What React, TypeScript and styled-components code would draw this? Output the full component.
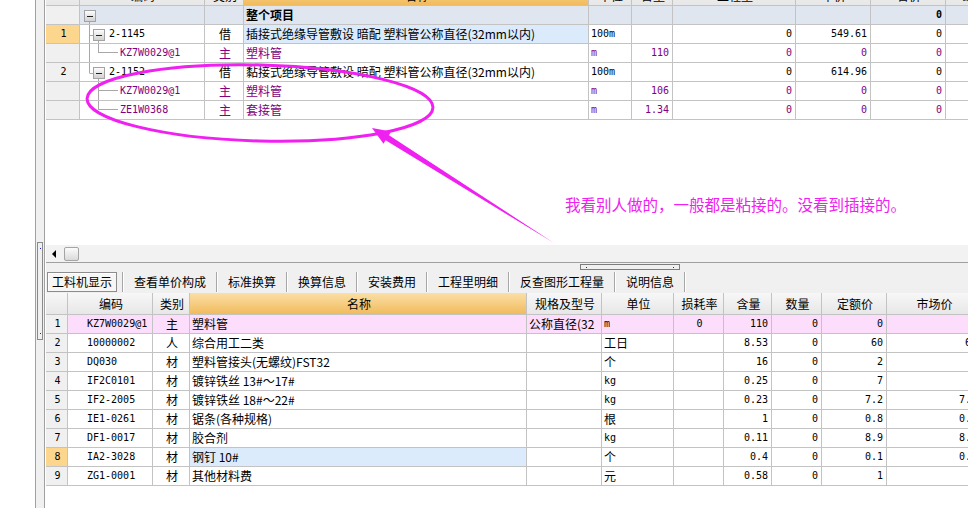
import React from "react";
import styled, { createGlobalStyle } from "styled-components";

const GlobalStyle = createGlobalStyle`
  html, body { margin: 0; padding: 0; background: #fff; overflow: hidden; }
  body {
    font-family: "Noto Sans CJK SC", "Noto Sans", sans-serif;
    font-size: 12px;
    color: #000;
  }
  * { box-sizing: border-box; }
`;

const LINE = "#c3c3c3";
const PURPLE = "#800080";
const MAGENTA = "#f020f0";
const MONO = `"DejaVu Sans Mono", "Liberation Mono", "Noto Sans CJK SC", monospace`;

const topCols = "34px 125px 39px 345px 43px 41px 123px 75px 75px 80px";
const bottomCols = "22px 85px 37px 337px 75px 72px 50px 48px 50px 65px 94px";

type Tone = "plain" | "num" | "numSel" | "group" | "focus" | "pink" | "head" | "headHot";

const tones: Record<Tone, string> = {
  plain: "#ffffff",
  num: "#f0f0f0",
  numSel: "#fdd68e",
  group: "#dfe6ef",
  focus: "#dcebfc",
  pink: "#fcdefc",
  head: "linear-gradient(#f7f7f7, #e7e7e7)",
  headHot: "linear-gradient(#fbdfa6, #f1bb5d)",
};

const Page = styled.div`
  position: relative;
  display: flex;
  width: 968px;
  height: 508px;
  overflow: hidden;
  background: #fff;
`;

const LeftBlank = styled.div`
  width: 35px;
  flex: none;
`;

const Gutter = styled.div`
  width: 10px;
  flex: none;
  border-left: 1px solid #a0a0a0;
  border-right: 1px solid #a0a0a0;
  background: #f0f0f0;
  padding-top: 242px;
  display: flex;
  justify-content: center;
  align-items: flex-start;
`;

const VHandle = styled.div`
  width: 6px;
  height: 98px;
  border: 1px solid #8a8a8a;
  display: flex;
  flex-direction: column;
  justify-content: space-between;
  align-items: center;
  padding: 5px 0;
`;

const Dot = styled.span`
  width: 1px;
  height: 1px;
  background: #1c1cc8;
`;

const Main = styled.div`
  flex: 1;
  min-width: 0;
  display: flex;
  flex-direction: column;
  padding-left: 1px;
`;

const TopPane = styled.div`
  height: 245px;
  flex: none;
  overflow: hidden;
  background: #fff;
`;

const TopGrid = styled.div`
  margin-top: -18px;
`;

const GridRow = styled.div<{ $cols: string; $h: number }>`
  display: grid;
  grid-template-columns: ${(p) => p.$cols};
  height: ${(p) => p.$h}px;
  width: max-content;
`;

const Cell = styled.div<{
  $align?: "left" | "center" | "right";
  $tone?: Tone;
  $purple?: boolean;
  $bold?: boolean;
  $mono?: boolean;
  $pad?: number;
  $top?: number;
}>`
  display: flex;
  align-items: center;
  justify-content: ${(p) =>
    p.$align === "right" ? "flex-end" : p.$align === "center" ? "center" : "flex-start"};
  padding: ${(p) => p.$top ?? 0}px ${(p) => (p.$align === "right" ? 3 : 0)}px 0
    ${(p) => (p.$align === "right" ? 0 : p.$pad ?? 2)}px;
  border-right: 1px solid ${LINE};
  border-bottom: 1px solid ${LINE};
  background: ${(p) => tones[p.$tone || "plain"]};
  color: ${(p) => (p.$purple ? PURPLE : "#000")};
  font-weight: ${(p) => (p.$bold ? 700 : 400)};
  font-family: ${(p) => (p.$mono ? MONO : "inherit")};
  font-size: ${(p) => (p.$mono ? "10px" : "12px")};
  line-height: 16px;
  white-space: nowrap;
  overflow: hidden;
`;

const CodeText = styled.span`
  margin-left: 1px;
  font-family: ${MONO};
  font-size: 10px;
`;

const HScroll = styled.div`
  height: 17px;
  flex: none;
  background: #f2f2f2;
  display: flex;
  align-items: center;
  padding-left: 6px;
`;

const ArrowLeft = styled.span`
  width: 0;
  height: 0;
  border-top: 4px solid transparent;
  border-bottom: 4px solid transparent;
  border-right: 4px solid #000;
`;

const Thumb = styled.span`
  margin-left: 8px;
  width: 15px;
  height: 14px;
  border: 1px solid #a4a4a4;
  border-radius: 2px;
  background: linear-gradient(#fbfbfb, #dadada);
`;

const BottomPane = styled.div`
  flex: 1;
  display: flex;
  flex-direction: column;
  background: #f0f0f0;
  border-top: 1px solid #a0a0a0;
`;

const SplitHandle = styled.div`
  margin: 1px 0 0 534px;
  width: 100px;
  height: 6px;
  border: 1px solid #7d7d7d;
  display: flex;
  justify-content: space-between;
  align-items: center;
  padding: 0 5px;
`;

const TabBar = styled.div`
  height: 23px;
  display: flex;
  align-items: center;
  padding-left: 1px;
`;

const Tab = styled.div<{ $active?: boolean }>`
  height: 20px;
  display: flex;
  align-items: center;
  padding: 0 ${(p) => (p.$active ? 4 : 10)}px;
  margin-right: ${(p) => (p.$active ? 5 : 0)}px;
  border: ${(p) => (p.$active ? "1px solid #8c8c8c" : "none")};
  box-shadow: ${(p) => (p.$active ? "inset 1px 1px 0 #ffffff" : "none")};
  background: ${(p) => (p.$active ? "#f6f6f6" : "transparent")};
  font-size: 12px;
  white-space: nowrap;
`;

const TabSep = styled.span`
  width: 2px;
  height: 20px;
  border-left: 1px solid #a6a6a6;
  border-right: 1px solid #ffffff;
`;

const BottomGrid = styled.div`
  flex: 1;
  background: #fff;
`;

const Overlay = styled.svg`
  position: absolute;
  left: 0;
  top: 0;
  pointer-events: none;
`;

const Note = styled.div`
  position: absolute;
  left: 565px;
  top: 194px;
  color: ${MAGENTA};
  font-size: 15.5px;
  line-height: 20px;
  white-space: nowrap;
`;

type TreeKind = "root" | "parent" | "parentLast" | "child" | "childMid" | "childLast";

function MinusBox({ x }: { x: number }) {
  return (
    <g>
      <rect x={x + 0.5} y={4.5} width={11} height={11} fill="url(#tb)" stroke="#a3a3a3" />
      <line x1={x + 3} y1={10.5} x2={x + 9} y2={10.5} stroke="#222" />
    </g>
  );
}

function TreeGlyph({ kind }: { kind: TreeKind }) {
  const g = "#a8a8a8";
  const parent = kind === "root" || kind === "parent" || kind === "parentLast";
  const w = parent ? 28 : 39;
  return (
    <svg width={w} height={18} style={{ flex: "none", display: "block" }}>
      <defs>
        <linearGradient id="tb" x1="0" y1="0" x2="0" y2="1">
          <stop offset="0" stopColor="#ffffff" />
          <stop offset="1" stopColor="#cfcfcf" />
        </linearGradient>
      </defs>
      {kind === "root" && (
        <>
          <line x1={9.5} y1={16} x2={9.5} y2={18} stroke={g} />
          <MinusBox x={4} />
        </>
      )}
      {(kind === "parent" || kind === "parentLast") && (
        <>
          <line x1={9.5} y1={0} x2={9.5} y2={kind === "parent" ? 18 : 10} stroke={g} />
          <line x1={9.5} y1={10.5} x2={13} y2={10.5} stroke={g} />
          <line x1={18.5} y1={16} x2={18.5} y2={18} stroke={g} />
          <MinusBox x={13} />
        </>
      )}
      {(kind === "child" || kind === "childMid" || kind === "childLast") && (
        <>
          {kind === "child" && <line x1={9.5} y1={0} x2={9.5} y2={18} stroke={g} />}
          <line x1={18.5} y1={0} x2={18.5} y2={kind === "childMid" ? 18 : 9} stroke={g} />
          <line x1={18.5} y1={8.5} x2={38} y2={8.5} stroke={g} />
        </>
      )}
    </svg>
  );
}

interface TopRowData {
  num: string;
  numTone: Tone;
  tree: TreeKind;
  code: string;
  type: string;
  name: string;
  nameTone?: Tone;
  unit: string;
  qty: string;
  c7: string;
  c8: string;
  c9: string;
  purple?: boolean;
  group?: boolean;
}

const topRows: TopRowData[] = [
  { num: "", numTone: "num", tree: "root", code: "", type: "", name: "整个项目", unit: "", qty: "", c7: "", c8: "", c9: "0", group: true },
  { num: "1", numTone: "numSel", tree: "parent", code: "2-1145", type: "借", name: "插接式绝缘导管敷设 暗配 塑料管公称直径(32mm以内)", nameTone: "focus", unit: "100m", qty: "", c7: "0", c8: "549.61", c9: "0" },
  { num: "", numTone: "num", tree: "child", code: "KZ7W0029@1", type: "主", name: "塑料管", unit: "m", qty: "110", c7: "0", c8: "0", c9: "0", purple: true },
  { num: "2", numTone: "num", tree: "parentLast", code: "2-1152", type: "借", name: "黏接式绝缘导管敷设 暗配 塑料管公称直径(32mm以内)", unit: "100m", qty: "", c7: "0", c8: "614.96", c9: "0" },
  { num: "", numTone: "num", tree: "childMid", code: "KZ7W0029@1", type: "主", name: "塑料管", unit: "m", qty: "106", c7: "0", c8: "0", c9: "0", purple: true },
  { num: "", numTone: "num", tree: "childLast", code: "ZE1W0368", type: "主", name: "套接管", unit: "m", qty: "1.34", c7: "0", c8: "0", c9: "0", purple: true },
];

const topHeads = ["", "编码", "类别", "名称", "单位", "含量", "工程量", "单价", "合价", "综合单价"];

const bottomHeads = ["", "编码", "类别", "名称", "规格及型号", "单位", "损耗率", "含量", "数量", "定额价", "市场价"];

const bottomRows: string[][] = [
  ["1", "KZ7W0029@1", "主", "塑料管", "公称直径(32", "m", "0", "110", "0", "0", "0"],
  ["2", "10000002", "人", "综合用工二类", "", "工日", "", "8.53", "0", "60", "60"],
  ["3", "DQ030", "材", "塑料管接头(无螺纹)FST32", "", "个", "", "16", "0", "2", "2"],
  ["4", "IF2C0101", "材", "镀锌铁丝 13#～17#", "", "kg", "", "0.25", "0", "7", "7"],
  ["5", "IF2-2005", "材", "镀锌铁丝 18#～22#", "", "kg", "", "0.23", "0", "7.2", "7.2"],
  ["6", "IE1-0261", "材", "锯条(各种规格)", "", "根", "", "1", "0", "0.8", "0.8"],
  ["7", "DF1-0017", "材", "胶合剂", "", "kg", "", "0.11", "0", "8.9", "8.9"],
  ["8", "IA2-3028", "材", "钢钉 10#", "", "个", "", "0.4", "0", "0.1", "0.1"],
  ["9", "ZG1-0001", "材", "其他材料费", "", "元", "", "0.58", "0", "1", "1"],
];

const tabs = ["工料机显示", "查看单价构成", "标准换算", "换算信息", "安装费用", "工程里明细", "反查图形工程量", "说明信息"];

const isLatin = (s: string) => /^[\x20-\x7e]*$/.test(s);

function TopTable() {
  return (
    <TopGrid>
      <GridRow $cols={topCols} $h={24}>
        {topHeads.map((h, i) => (
          <Cell key={i} $align="center" $tone={i === 3 ? "headHot" : "head"} $top={4}>
            {h}
          </Cell>
        ))}
      </GridRow>
      {topRows.map((r, i) => {
        const bg: Tone = r.group ? "group" : "plain";
        return (
          <GridRow key={i} $cols={topCols} $h={19}>
            <Cell $align="center" $tone={r.numTone} $mono>{r.num}</Cell>
            <Cell $tone={bg} $pad={0} $purple={r.purple}>
              <TreeGlyph kind={r.tree} />
              <CodeText>{r.code}</CodeText>
            </Cell>
            <Cell $align="center" $tone={bg} $purple={r.purple}>{r.type}</Cell>
            <Cell $tone={r.nameTone || bg} $purple={r.purple} $bold={r.group}>{r.name}</Cell>
            <Cell $tone={bg} $purple={r.purple} $mono>{r.unit}</Cell>
            <Cell $align="right" $tone={bg} $purple={r.purple} $mono>{r.qty}</Cell>
            <Cell $align="right" $tone={bg} $purple={r.purple} $mono>{r.c7}</Cell>
            <Cell $align="right" $tone={bg} $purple={r.purple} $mono>{r.c8}</Cell>
            <Cell $align="right" $tone={bg} $purple={r.purple} $bold={r.group} $mono>{r.c9}</Cell>
            <Cell $tone={bg} />
          </GridRow>
        );
      })}
    </TopGrid>
  );
}

const bottomAlign: ("left" | "center" | "right")[] = [
  "center", "left", "center", "left", "left", "left", "center", "right", "right", "right", "right",
];

function BottomTable() {
  return (
    <BottomGrid>
      <GridRow $cols={bottomCols} $h={22}>
        {bottomHeads.map((h, i) => (
          <Cell key={i} $align="center" $tone={i === 3 ? "headHot" : "head"}>
            {h}
          </Cell>
        ))}
      </GridRow>
      {bottomRows.map((r, i) => {
        const pink = i === 0;
        const sel = i === 7;
        return (
          <GridRow key={i} $cols={bottomCols} $h={19}>
            {r.map((v, j) => {
              let tone: Tone = pink ? "pink" : "plain";
              if (j === 0) tone = sel ? "numSel" : "num";
              if (j === 3 && sel) tone = "focus";
              const mono = j !== 3 && j !== 4 && isLatin(v);
              return (
                <Cell
                  key={j}
                  $align={bottomAlign[j]}
                  $tone={tone}
                  $pad={j === 1 ? 19 : 2}
                  $mono={mono}
                >
                  {v}
                </Cell>
              );
            })}
          </GridRow>
        );
      })}
    </BottomGrid>
  );
}

function Annotation() {
  // hand-drawn ellipse and arrow over the grid
  return (
    <>
      <Overlay width={968} height={508}>
        <ellipse
          cx={260}
          cy={103}
          rx={173}
          ry={38}
          fill="none"
          stroke={MAGENTA}
          strokeWidth={3}
          transform="rotate(1.5 260 103)"
        />
        <polygon
          points="372,128 391,131.5 389,135.3 554,243 385.6,140.2 383.5,143.8"
          fill={MAGENTA}
        />
      </Overlay>
      <Note>我看别人做的，一般都是粘接的。没看到插接的。</Note>
    </>
  );
}

export default function App() {
  return (
    <>
      <GlobalStyle />
      <Page>
        <LeftBlank />
        <Gutter>
          <VHandle>
            <Dot />
            <Dot />
          </VHandle>
        </Gutter>
        <Main>
          <TopPane>
            <TopTable />
          </TopPane>
          <HScroll>
            <ArrowLeft />
            <Thumb />
          </HScroll>
          <BottomPane>
            <SplitHandle>
              <Dot />
              <Dot />
            </SplitHandle>
            <TabBar>
              {tabs.map((t, i) => (
                <React.Fragment key={t}>
                  <Tab $active={i === 0}>{t}</Tab>
                  <TabSep />
                </React.Fragment>
              ))}
            </TabBar>
            <BottomTable />
          </BottomPane>
        </Main>
        <Annotation />
      </Page>
    </>
  );
}
